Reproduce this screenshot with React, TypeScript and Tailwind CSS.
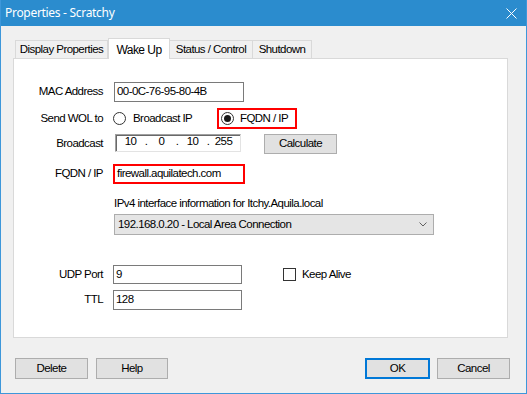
import React from "react";

const F = { fontFamily: '"Liberation Sans", Arial, sans-serif' };

function Radio({ checked }: { checked?: boolean }) {
  return (
    <div className="w-[13px] h-[13px] rounded-full border border-[#333333] bg-white flex items-center justify-center shrink-0">
      {checked && <div className="w-[7px] h-[7px] rounded-full bg-[#1a1a1a]" />}
    </div>
  );
}

function Label({ children }: { children: React.ReactNode }) {
  return <div className="w-[89px] text-right shrink-0">{children}</div>;
}

export default function App() {
  return (
    <div
      className="w-[527px] h-[394px] flex flex-col bg-[#f0f0f0] border border-t-0 border-[#3d97da] text-[11.5px] tracking-[-0.55px] text-black overflow-hidden"
      style={F}
    >
      {/* Title bar */}
      <div className="h-[26px] bg-[#2b8cce] flex items-center justify-between shrink-0">
        <div
          className="pl-[4px] text-white text-[12px] tracking-[-0.3px]"
          style={{ fontFamily: '"Noto Sans", "Open Sans", sans-serif' }}
        >
          Properties - Scratchy
        </div>
        <svg width="11" height="11" viewBox="0 0 11 11" className="mr-[9px]">
          <path d="M0.5 0.5 L10.5 10.5 M10.5 0.5 L0.5 10.5" stroke="white" strokeWidth="1" />
        </svg>
      </div>

      {/* Tabs */}
      <div className="mt-[12px] ml-[14px] h-[20px] flex items-end">
        <div className="w-[93px] h-[18px] border border-b-0 border-[#d9d9d9] bg-[#f0f0f0] flex items-center justify-center">
          Display Properties
        </div>
        <div className="relative z-10 w-[62px] h-[21px] -mb-px border border-b-0 border-[#d9d9d9] bg-white flex items-start justify-center pt-[2px] text-[12px]">
          Wake Up
        </div>
        <div className="w-[83px] h-[18px] border border-b-0 border-l-0 border-[#d9d9d9] bg-[#f0f0f0] flex items-center justify-center">
          Status / Control
        </div>
        <div className="w-[59px] h-[18px] border border-b-0 border-l-0 border-[#d9d9d9] bg-[#f0f0f0] flex items-center justify-center">
          Shutdown
        </div>
      </div>

      {/* Panel */}
      <div className="ml-[12px] w-[495px] h-[280px] border border-[#d9d9d9] bg-white flex flex-col shrink-0">
        {/* MAC */}
        <div className="mt-[23px] h-[20px] flex items-center">
          <Label>MAC Address</Label>
          <div className="ml-[11px] w-[130px] h-[20px] border border-[#7a7a7a] flex items-center pl-[2px]">
            00-0C-76-95-80-4B
          </div>
        </div>

        {/* Send WOL */}
        <div className="mt-[6px] h-[21px] flex items-center">
          <Label>Send WOL to</Label>
          <div className="ml-[10px] w-[104px] flex items-center">
            <Radio />
            <span className="ml-[7px]">Broadcast IP</span>
          </div>
          <div className="w-[80px] h-[21px] border-2 border-[#ff0000] flex items-center pl-[2px]">
            <Radio checked />
            <span className="ml-[6px]">FQDN / IP</span>
          </div>
        </div>

        {/* Broadcast */}
        <div className="mt-[5px] h-[20px] flex items-center">
          <Label>Broadcast</Label>
          <div className="ml-[12px] self-start w-[126px] h-[18px] border border-t-[#a0a0a0] border-l-[#a0a0a0] border-r-[#e3e3e3] border-b-[#e3e3e3] shadow-[inset_1px_1px_0_#696969] flex items-end pb-[1px] pl-[4px]">
            <span className="w-[21px] text-center">10</span>
            <span className="w-[10px] text-center">.</span>
            <span className="w-[21px] text-center">0</span>
            <span className="w-[10px] text-center">.</span>
            <span className="w-[21px] text-center">10</span>
            <span className="w-[10px] text-center">.</span>
            <span className="w-[21px] text-center">255</span>
          </div>
          <button className="ml-[23px] w-[73px] h-[20px] border border-[#adadad] bg-[#e1e1e1] flex items-center justify-center">
            Calculate
          </button>
        </div>

        {/* FQDN */}
        <div className="mt-[10px] h-[20px] flex items-center">
          <Label>FQDN / IP</Label>
          <div className="ml-[10px] w-[132px] h-[20px] border-2 border-[#ff0000] flex items-center pl-[2px]">
            firewall.aquilatech.com
          </div>
        </div>

        {/* IPv4 info */}
        <div className="mt-[12px] h-[14px] leading-[14px] ml-[100px]">
          IPv4 interface information for Itchy.Aquila.local
        </div>

        <div className="mt-[4px] ml-[100px] w-[320px] h-[21px] border border-[#adadad] bg-[#e5e5e5] flex items-center justify-between pl-[3px] pr-[6px]">
          <span>192.168.0.20 - Local Area Connection</span>
          <svg width="8" height="5" viewBox="0 0 8 5">
            <path d="M0.5 0.5 L4 4 L7.5 0.5" stroke="#606060" strokeWidth="1" fill="none" />
          </svg>
        </div>

        {/* UDP Port */}
        <div className="mt-[30px] h-[19px] flex items-center">
          <Label>UDP Port</Label>
          <div className="ml-[10px] w-[129px] h-[19px] border border-[#7a7a7a] flex items-center pl-[2px]">
            9
          </div>
          <div className="ml-[41px] w-[13px] h-[13px] border border-[#333333] bg-white" />
          <span className="ml-[6px]">Keep Alive</span>
        </div>

        {/* TTL */}
        <div className="mt-[6px] h-[20px] flex items-center">
          <Label>TTL</Label>
          <div className="ml-[10px] w-[129px] h-[20px] border border-[#7a7a7a] flex items-center pl-[2px]">
            128
          </div>
        </div>
      </div>

      {/* Buttons */}
      <div className="mt-[20px] h-[21px] flex items-center">
        <button className="ml-[14px] w-[73px] h-[21px] border border-[#adadad] bg-[#e1e1e1] flex items-center justify-center">
          Delete
        </button>
        <button className="ml-[8px] w-[72px] h-[21px] border border-[#adadad] bg-[#e1e1e1] flex items-center justify-center">
          Help
        </button>
        <div className="flex-1" />
        <button className="w-[65px] h-[21px] border-2 border-[#0078d7] bg-[#e1e1e1] flex items-center justify-center">
          OK
        </button>
        <button className="ml-[7px] mr-[16px] w-[73px] h-[21px] border border-[#adadad] bg-[#e1e1e1] flex items-center justify-center">
          Cancel
        </button>
      </div>
    </div>
  );
}
